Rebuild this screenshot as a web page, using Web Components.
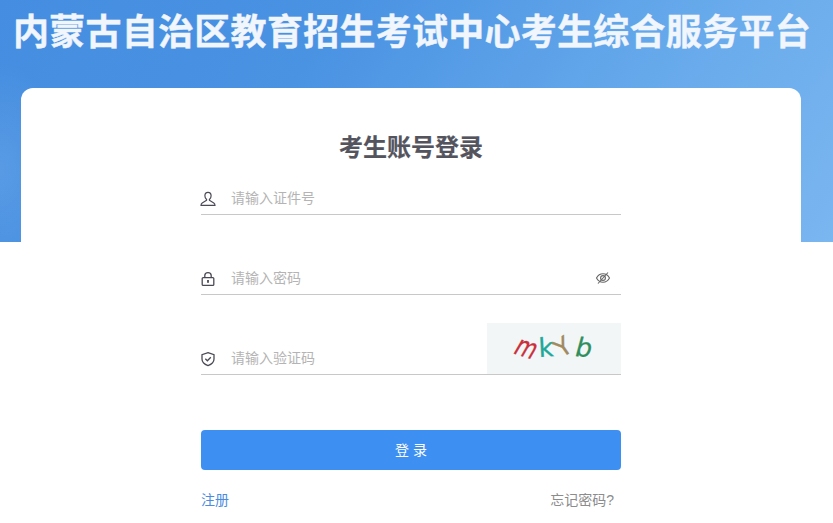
<!DOCTYPE html>
<html lang="zh">
<head>
<meta charset="utf-8">
<title>考生账号登录</title>
<style>
  html, body { margin: 0; padding: 0; background: #fff; }
  body { font-family: "Liberation Sans", "Noto Sans CJK SC", sans-serif; overflow: hidden; }
</style>
</head>
<body>
<login-page>
  <login-card>
    <login-field icon="user" placeholder="请输入证件号"></login-field>
    <login-field icon="lock" placeholder="请输入密码" type="password">
      <svg slot="after" width="16" height="16" viewBox="0 0 16 16" fill="none" stroke="#666" stroke-width="1.1">
        <path d="M1.5 8C3 5.2 5.3 3.8 8 3.8S13 5.2 14.5 8C13 10.8 10.7 12.2 8 12.2S3 10.8 1.5 8Z"/>
        <circle cx="8" cy="8" r="2.4"/>
        <path d="M13 2.5 3 13.5"/>
      </svg>
    </login-field>
    <login-field icon="shield" placeholder="请输入验证码">
      <captcha-image slot="after"></captcha-image>
    </login-field>
  </login-card>
</login-page>

<script>
  const ICONS = {
    user: `<svg width="16" height="16" viewBox="0 0 16 16" fill="none" stroke="#4a4a55" stroke-width="1.2">
      <path d="M8 1.3C6 1.3 4.9 2.8 4.9 4.7 4.9 6.3 5.6 7.5 6.4 8.2 6.8 8.6 6.7 9.3 6.2 9.6L2.2 11.9C1.4 12.4 1 13.2 1 14.4H15C15 13.2 14.6 12.4 13.8 11.9L9.8 9.6C9.3 9.3 9.2 8.6 9.6 8.2 10.4 7.5 11.1 6.3 11.1 4.7 11.1 2.8 10 1.3 8 1.3Z"/>
    </svg>`,
    lock: `<svg width="16" height="16" viewBox="0 0 16 16" fill="none" stroke="#4a4a55" stroke-width="1.3">
      <rect x="2.2" y="6.6" width="11.6" height="7.8" rx="1"/>
      <path d="M4.8 6.6V4.6C4.8 2.8 6.2 1.6 8 1.6S11.2 2.8 11.2 4.6V6.6"/>
      <rect x="7.1" y="9" width="1.8" height="2.8" fill="#4a4a55" stroke="none"/>
    </svg>`,
    shield: `<svg width="16" height="16" viewBox="0 0 16 16" fill="none" stroke="#4a4a55" stroke-width="1.3">
      <path d="M8 1.6 14 3.6V8C14 11.2 11.4 13.4 8 14.6 4.6 13.4 2 11.2 2 8V3.6Z"/>
      <path d="M5.3 7.8 7.4 9.8 10.8 6.3"/>
    </svg>`
  };

  class LoginPage extends HTMLElement {
    constructor() {
      super();
      this.attachShadow({ mode: 'open' });
    }

    connectedCallback() {
      this.shadowRoot.innerHTML = `
      <style>
        :host {
          display: block;
          height: 523px;
          overflow: hidden;
          background:
            radial-gradient(ellipse 70px 110px at 0 170px, rgba(255,255,255,.10), transparent) no-repeat,
            linear-gradient(125deg, #448de0 0%, #4a93e3 35%, #66a9eb 70%, #7ab6f0 100%) no-repeat;
          background-size: 100% 242px;
        }
        .wrap {
          width: 822px;
          box-sizing: border-box;
          padding: 0 21px;
        }
        h1 {
          margin: 0 -21px;
          height: 88px;
          box-sizing: border-box;
          padding: 11px 0 0 13px;
          font-size: 36px;
          line-height: 44px;
          letter-spacing: .27px;
          font-weight: 700;
          -webkit-text-stroke: .4px #f1f5fc;
          color: #f1f5fc;
          white-space: nowrap;
        }
      </style>
      <div class="wrap">
        <h1>内蒙古自治区教育招生考试中心考生综合服务平台</h1>
        <slot></slot>
      </div>
      `;
    }
  }

  class LoginCard extends HTMLElement {
    constructor() {
      super();
      this.attachShadow({ mode: 'open' });
    }

    connectedCallback() {
      this.shadowRoot.innerHTML = `
      <style>
        :host {
          display: block;
          background: #fff;
          border-radius: 12px 12px 0 0;
          height: 435px;
          box-sizing: border-box;
          padding: 44px 180px 0;
        }
        h2 {
          margin: 0;
          font-size: 24px;
          line-height: 32px;
          font-weight: 700;
          -webkit-text-stroke: .2px #54545e;
          color: #54545e;
          text-align: center;
        }
        .fields {
          display: flex;
          flex-direction: column;
          gap: 29px;
        }
        button {
          display: block;
          width: 100%;
          height: 40px;
          margin-top: 55px;
          border: 0;
          border-radius: 4px;
          background: #3d8ff2;
          color: #fff;
          font: inherit;
          font-size: 14px;
          padding: 0 0 2px;
        }
        .links {
          display: flex;
          justify-content: space-between;
          padding: 20px 7px 0 0;
          font-size: 14px;
          line-height: 20px;
        }
        a { text-decoration: none; }
        .reg { color: #4b8be0; }
        .forgot { color: #8c8c8c; }
      </style>
      <h2>考生账号登录</h2>
      <div class="fields"><slot></slot></div>
      <button type="button">登 录</button>
      <div class="links">
        <a class="reg" href="#">注册</a>
        <a class="forgot" href="#">忘记密码?</a>
      </div>
      `;
    }
  }

  class LoginField extends HTMLElement {
    constructor() {
      super();
      this.attachShadow({ mode: 'open' });
    }

    connectedCallback() {
      const icon = this.getAttribute('icon') || 'user';
      const placeholder = this.getAttribute('placeholder') || '';
      const type = this.getAttribute('type') || 'text';

      this.shadowRoot.innerHTML = `
      <style>
        :host {
          display: flex;
          align-items: flex-end;
          height: 51px;
          box-sizing: border-box;
          border-bottom: 1px solid #c8c8c8;
        }
        .icon {
          flex: none;
          width: 30px;
          height: 31px;
          display: flex;
          align-items: center;
        }
        .icon svg { margin-left: -1px; }
        input {
          flex: 1;
          min-width: 0;
          height: 31px;
          box-sizing: border-box;
          border: 0;
          outline: 0;
          padding: 0 0 2px;
          background: none;
          font: inherit;
          font-size: 14px;
          color: #333;
        }
        input::placeholder { color: #b4b4b4; opacity: 1; }
        ::slotted(svg) {
          margin: 0 10px 8px 0;
        }
      </style>
      <span class="icon">${ICONS[icon]}</span>
      <input type="${type}" placeholder="${placeholder}">
      <slot name="after"></slot>
      `;
    }
  }

  class CaptchaImage extends HTMLElement {
    constructor() {
      super();
      this.attachShadow({ mode: 'open' });
    }

    connectedCallback() {
      this.shadowRoot.innerHTML = `
      <style>
        :host {
          flex: none;
          display: block;
          width: 134px;
          height: 51px;
          background: #f3f6f6;
        }
        svg { display: block; }
        text { font-family: "DejaVu Sans", sans-serif; font-size: 26px; stroke-width: .3px; }
      </style>
      <svg width="134" height="51" viewBox="0 0 134 51">
        <text transform="translate(25 30) rotate(18) skewX(-12) scale(.82 1.1)" fill="#c9303c" stroke="#c9303c">m</text>
        <text transform="translate(52 34) rotate(-3)" fill="#1ea89a" stroke="#1ea89a">k</text>
        <text transform="translate(74.8 35.4) rotate(-35)" fill="#a08a60" stroke="#a08a60" style="font-size:25px">Y</text>
        <text transform="translate(88 33) rotate(4)" fill="#2f8f5c" stroke="#2f8f5c" font-style="italic">b</text>
      </svg>
      `;
    }
  }

  customElements.define('login-page', LoginPage);
  customElements.define('login-card', LoginCard);
  customElements.define('login-field', LoginField);
  customElements.define('captcha-image', CaptchaImage);
</script>
</body>
</html>
